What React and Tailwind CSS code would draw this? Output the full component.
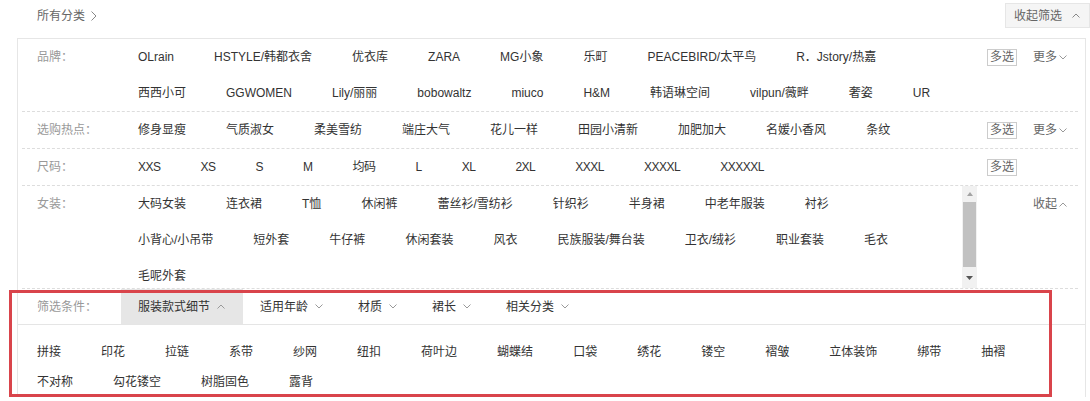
import React from "react";

const ChevronDown = ({ c = "#999" }) => (
  <svg width="8" height="5" viewBox="0 0 8 5" className="shrink-0">
    <polyline points="0.5,0.5 4,4 7.5,0.5" fill="none" stroke={c} strokeWidth="1" />
  </svg>
);
const ChevronUp = ({ c = "#999" }) => (
  <svg width="8" height="5" viewBox="0 0 8 5" className="shrink-0">
    <polyline points="0.5,4.5 4,1 7.5,4.5" fill="none" stroke={c} strokeWidth="1" />
  </svg>
);

const brand = [
  ["OLrain", "HSTYLE/韩都衣舍", "优衣库", "ZARA", "MG小象", "乐町", "PEACEBIRD/太平鸟", "R．Jstory/热嘉"],
  ["西西小可", "GGWOMEN", "Lily/丽丽", "bobowaltz", "miuco", "H&M", "韩语琳空间", "vilpun/薇畔", "奢姿", "UR"],
];
const hot = [["修身显瘦", "气质淑女", "柔美雪纺", "端庄大气", "花儿一样", "田园小清新", "加肥加大", "名媛小香风", "条纹"]];
const sizes = [["XXS", "XS", "S", "M", "均码", "L", "XL", "2XL", "XXXL", "XXXXL", "XXXXXL"]];
const women = [
  ["大码女装", "连衣裙", "T恤", "休闲裤", "蕾丝衫/雪纺衫", "针织衫", "半身裙", "中老年服装", "衬衫"],
  ["小背心/小吊带", "短外套", "牛仔裤", "休闲套装", "风衣", "民族服装/舞台装", "卫衣/绒衫", "职业套装", "毛衣"],
  ["毛呢外套"],
];
const tabs = ["服装款式细节", "适用年龄", "材质", "裙长", "相关分类"];
const details = [
  ["拼接", "印花", "拉链", "系带", "纱网", "纽扣", "荷叶边", "蝴蝶结", "口袋", "绣花", "镂空", "褶皱", "立体装饰", "绑带", "抽褶"],
  ["不对称", "勾花镂空", "树脂固色", "露背"],
];

function Lines({ lines, lh = "leading-[36px]", extra = "" }) {
  return (
    <div className="flex flex-col text-[#333]">
      {lines.map((line, i) => (
        <div key={i} className={`flex gap-x-[40px] whitespace-nowrap ${lh} ${extra}`}>
          {line.map((t) => (
            <span key={t}>{t}</span>
          ))}
        </div>
      ))}
    </div>
  );
}

function Label({ children }) {
  return <div className="w-[116px] shrink-0 pl-[15px] leading-[36px] text-[#999]">{children}</div>;
}

function RightBtns({ more }) {
  return (
    <div className="flex h-[36px] items-center pl-[10px]">
      <span className="flex h-[17px] w-[30px] items-center justify-center border border-[#ccc] leading-[15px] text-[#666]">
        多选
      </span>
      {more && (
        <span className="ml-[16px] flex items-center gap-[2px] text-[#666]">
          更多
          <ChevronDown />
        </span>
      )}
    </div>
  );
}

function Row({ label, lines, more, extra }) {
  return (
    <div className="flex border-b border-dashed border-[#ddd]">
      <div className="flex w-[955px] shrink-0">
        <Label>{label}</Label>
        <Lines lines={lines} extra={extra} />
      </div>
      <RightBtns more={more} />
    </div>
  );
}

export default function App() {
  return (
    <div className="relative h-[401px] w-[1090px] overflow-hidden bg-white text-[12px] font-['Liberation_Sans','Noto_Sans_CJK_SC',sans-serif]">
      {/* header */}
      <div className="flex h-[38px] items-start justify-between">
        <div className="flex items-center gap-[6px] pl-[37px] pt-[8px] leading-[16px] text-[#666]">
          所有分类
          <svg width="6" height="10" viewBox="0 0 6 10">
            <polyline points="0.5,0.5 5,5 0.5,9.5" fill="none" stroke="#888" strokeWidth="1" />
          </svg>
        </div>
        <div className="mt-[3px] flex h-[25px] w-[85px] shrink-0 items-center border border-[#e6e6e6] bg-[#f5f5f5] pl-[8px] text-[#666]">
          <span className="whitespace-nowrap">收起筛选</span>
          <span className="ml-[10px] flex items-center">
            <ChevronUp c="#888" />
          </span>
        </div>
      </div>

      {/* filter panel */}
      <div className="ml-[17px] w-[1069px] border-l border-r border-t border-[#e6e6e6]">
        <div className="ml-[4px] mr-[7px]">
          <Row label="品牌：" lines={brand} more />
          <Row label="选购热点：" lines={hot} more />
          <Row label="尺码：" lines={sizes} extra="tracking-[-0.5px]" />
          {/* women row with scroll */}
          <div className="flex border-b border-dashed border-[#ddd]">
            <div className="flex h-[102px] w-[940px] shrink-0 overflow-hidden">
              <Label>女装：</Label>
              <Lines lines={women} />
            </div>
            <div className="flex h-[102px] w-[15px] shrink-0 flex-col bg-[#f1f1f1]">
              <div className="flex h-[16px] items-center justify-center">
                <svg width="6" height="4" viewBox="0 0 6 4">
                  <polygon points="0,4 3,0 6,4" fill="#a3a3a3" />
                </svg>
              </div>
              <div className="mx-[1px] h-[65px] bg-[#c1c1c1]" />
              <div className="flex flex-1 items-center justify-center">
                <svg width="7" height="4" viewBox="0 0 7 4">
                  <polygon points="0,0 7,0 3.5,4" fill="#555" />
                </svg>
              </div>
            </div>
            <div className="flex h-[36px] items-center pl-[56px] text-[#666]">
              <span className="flex items-center gap-[2px]">
                收起
                <ChevronUp />
              </span>
            </div>
          </div>
        </div>

        {/* tabs */}
        <div className="flex h-[36px] border-b border-[#e5e5e5]">
          <div className="flex w-[103px] shrink-0 items-center pl-[19px] text-[#999]">筛选条件：</div>
          {tabs.map((t, i) => (
            <div
              key={t}
              className={`flex items-center gap-[7px] pl-[17px] pr-[18px] text-[#333] ${i === 0 ? "bg-[#e6e6e6]" : ""}`}
            >
              {t}
              {i === 0 ? <ChevronUp /> : <ChevronDown />}
            </div>
          ))}
        </div>

        {/* details */}
        <div className="pl-[19px] pt-[12px]">
          <Lines lines={details} lh="leading-[30px]" />
        </div>
      </div>

      {/* annotation overlay */}
      <div className="pointer-events-none absolute left-[9px] top-[290px] h-[107px] w-[1043px] border-[3px] border-[#d9444b]" />
    </div>
  );
}
